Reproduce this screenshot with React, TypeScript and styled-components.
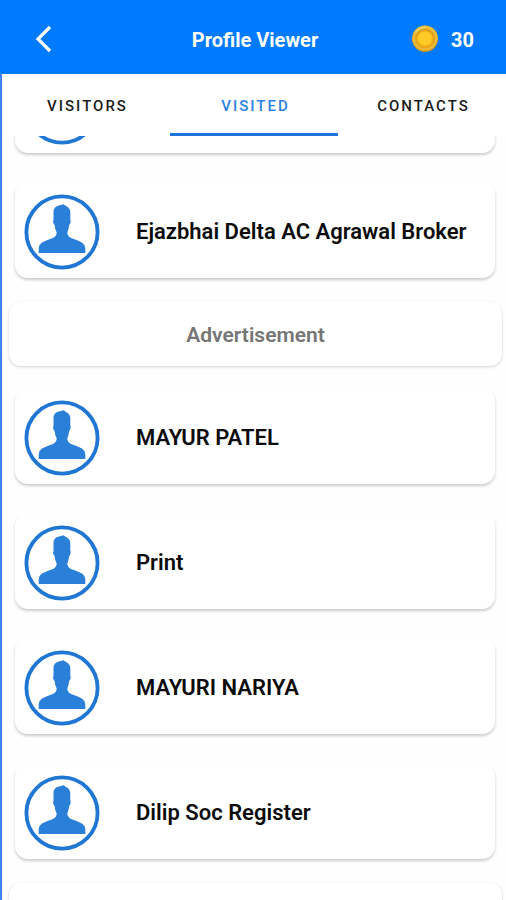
import React, { useLayoutEffect, useRef, useState } from "react";
import styled, { createGlobalStyle } from "styled-components";

const GlobalStyle = createGlobalStyle`
  *, *::before, *::after { box-sizing: border-box; }
  body {
    margin: 0;
    background: #fefefe;
    font-family: Roboto, "Liberation Sans", sans-serif;
  }
`;

const Screen = styled.div`
  display: flex;
  flex-direction: column;
  height: 100vh;
  overflow: hidden;
`;

const Header = styled.header`
  flex: none;
  display: grid;
  grid-template-columns: 1fr auto 1fr;
  align-items: center;
  height: 74px;
  padding: 4px 32px 0;
  background: #007aff;
  color: #fff;
`;

const BackButton = styled.button`
  justify-self: start;
  display: flex;
  padding: 0;
  border: 0;
  background: none;
  color: inherit;
  cursor: pointer;
`;

const Title = styled.h1`
  margin: 0;
  padding: 2px 0 0 4px;
  font-size: 20px;
  line-height: 24px;
  font-weight: 700;
`;

const Coins = styled.div`
  justify-self: end;
  display: flex;
  align-items: center;
  gap: 12px;
  font-size: 20px;
  line-height: 24px;
  font-weight: 700;

  span { padding-top: 2px; }
`;

const Body = styled.main`
  flex: 1;
  min-height: 0;
  display: flex;
  flex-direction: column;
  border-left: 2px solid #3f83f8;
`;

const TabBar = styled.div`
  flex: none;
  display: grid;
  grid-template-columns: repeat(3, 1fr);
  height: 62px;
  background: #fff;
`;

const Tab = styled.button<{ $active: boolean }>`
  padding: 5px 0 0 3px;
  border: 0;
  border-bottom: 3px solid ${(p) => (p.$active ? "#1f74dc" : "transparent")};
  background: none;
  color: ${(p) => (p.$active ? "#2a82e4" : "#1c1c1c")};
  font: 500 15px/20px Roboto, "Liberation Sans", sans-serif;
  letter-spacing: 2px;
  cursor: pointer;
`;

const List = styled.ul`
  flex: 1;
  min-height: 0;
  margin: 0;
  padding: 0 4px 24px 7px;
  overflow-y: auto;
  scrollbar-width: none;
  list-style: none;
`;

const Card = styled.li`
  display: flex;
  align-items: center;
  gap: 36px;
  height: 96px;
  margin: 0 7px 29px 6px;
  padding: 4px 9px 0;
  border-radius: 13px;
  background: #fff;
  box-shadow: 0 2px 3px rgba(0, 0, 0, 0.2);
`;

const Name = styled.span`
  color: #0c0c0c;
  font-size: 22px;
  line-height: 28px;
  font-weight: 600;
  white-space: nowrap;
`;

const AdCard = styled.li`
  display: flex;
  align-items: center;
  justify-content: center;
  height: 64px;
  margin: -5px 0 22px;
  padding-top: 2px;
  border-radius: 12px;
  background: #fff;
  box-shadow: 0 1px 3px rgba(0, 0, 0, 0.18);
  color: #757575;
  font-size: 21px;
  line-height: 28px;
  font-weight: 600;
`;

const Avatar = () => (
  <svg width="76" height="76" viewBox="0 0 76 76" aria-hidden="true">
    <circle cx="38" cy="38" r="35.6" fill="#fff" stroke="#1f76d3" strokeWidth="3.8" />
    <path
      fill="#2a7fd9"
      d="M29.500 26V17Q30 13 34 11.700L36 11.200L39.500 10.200L42 12Q46 13.800 46.300 18V25.500Q47.300 27 46.200 29.500L45.200 31Q44.500 36 43.300 38.500Q43.500 42 47 44Q54 46.300 58 48.500Q61 50.500 61.300 54V59H14.700V54Q15 50.500 18 48.500Q22 46.300 29 44Q32.500 42 32.700 38.500Q31 36 30.600 31L29.500 29.500Q28.500 27 29.500 26Z"
    />
  </svg>
);

const CoinIcon = () => (
  <svg width="28" height="28" viewBox="0 0 28 28" aria-hidden="true">
    <circle cx="14" cy="14" r="13" fill="#c99526" />
    <circle cx="14" cy="13" r="12.600" fill="#edbb38" />
    <circle cx="14" cy="13.500" r="9.800" fill="#d99a18" />
    <circle cx="14" cy="14" r="8.800" fill="#f0ae18" />
    <circle cx="14" cy="13.500" r="7" fill="#ffca26" />
    <path d="M5 7Q9 2.500 14 2.300" fill="none" stroke="#f8d765" strokeWidth="1.600" strokeLinecap="round" />
  </svg>
);

type Entry = { kind: "person"; name: string } | { kind: "ad"; label?: string };

const entries: Entry[] = [
  { kind: "person", name: "" },
  { kind: "person", name: "Ejazbhai Delta AC Agrawal Broker" },
  { kind: "ad", label: "Advertisement" },
  { kind: "person", name: "MAYUR PATEL" },
  { kind: "person", name: "Print" },
  { kind: "person", name: "MAYURI NARIYA" },
  { kind: "person", name: "Dilip Soc Register" },
  { kind: "ad" },
];

const tabs = ["VISITORS", "VISITED", "CONTACTS"];
const initialScroll = 79;

export default function App() {
  const [active, setActive] = useState("VISITED");
  const list = useRef<HTMLUListElement>(null);

  useLayoutEffect(() => {
    if (list.current) list.current.scrollTop = initialScroll;
  }, []);

  return (
    <Screen>
      <GlobalStyle />
      <Header>
        <BackButton aria-label="Back">
          <svg width="24" height="30" viewBox="0 0 24 30" fill="none" stroke="currentColor" strokeWidth="3.200">
            <path d="M18 3L6 15L18 27" />
          </svg>
        </BackButton>
        <Title>Profile Viewer</Title>
        <Coins>
          <CoinIcon />
          <span>30</span>
        </Coins>
      </Header>
      <Body>
        <TabBar role="tablist">
          {tabs.map((label) => (
            <Tab
              key={label}
              role="tab"
              aria-selected={label === active}
              $active={label === active}
              onClick={() => setActive(label)}
            >
              {label}
            </Tab>
          ))}
        </TabBar>
        <List ref={list}>
          {entries.map((entry, i) =>
            entry.kind === "ad" ? (
              <AdCard key={i}>{entry.label}</AdCard>
            ) : (
              <Card key={i}>
                <Avatar />
                <Name>{entry.name}</Name>
              </Card>
            )
          )}
        </List>
      </Body>
    </Screen>
  );
}
